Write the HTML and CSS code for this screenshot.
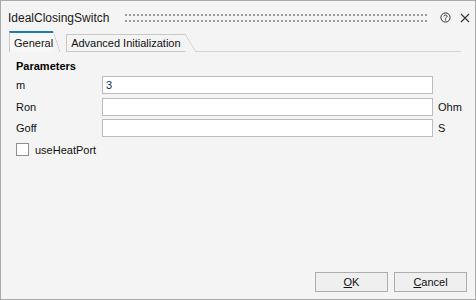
FILE: index.html
```html
<!DOCTYPE html>
<html lang="en">
<head>
    <meta charset="UTF-8">
    <title>IdealClosingSwitch</title>
    <link rel="stylesheet" href="styles.css">
</head>
<body>
    <div class="window">
        <div class="titlebar">
            <span class="title">IdealClosingSwitch</span>
            <span class="grip"></span>
            <svg class="help" width="11" height="11" viewBox="0 0 11 11">
                <circle cx="5.5" cy="5.5" r="4.6" fill="none" stroke="#333" stroke-width="1"/>
                <path d="M3.8 4.4 C3.8 2.6 7.2 2.6 7.2 4.3 C7.2 5.4 5.5 5.4 5.5 6.6" fill="none" stroke="#333" stroke-width="1"/>
                <rect x="5" y="7.4" width="1.1" height="1.1" fill="#333"/>
            </svg>
            <svg class="close" width="10" height="10" viewBox="0 0 10 10">
                <path d="M1 1 L9 9 M9 1 L1 9" stroke="#333" stroke-width="1.1"/>
            </svg>
        </div>

        <div class="tabs">
            <div class="tab active">General</div>
            <div class="tab">Advanced Initialization</div>
            <div class="tab-line"></div>
        </div>

        <div class="panel">
            <div class="group-title">Parameters</div>
            <div class="params">
                <label for="m">m</label>
                <input type="text" id="m" value="3">
                <span class="unit"></span>

                <label for="ron">Ron</label>
                <input type="text" id="ron">
                <span class="unit">Ohm</span>

                <label for="goff">Goff</label>
                <input type="text" id="goff">
                <span class="unit">S</span>
            </div>
            <label class="check"><span class="box"></span>useHeatPort</label>
        </div>

        <div class="buttons">
            <button type="button"><u>O</u>K</button>
            <button type="button"><u>C</u>ancel</button>
        </div>
    </div>
</body>
</html>
```

FILE: styles.css
```css
html, body {
    margin: 0;
    padding: 0;
}

body {
    font-family: "Liberation Sans", Arial, sans-serif;
    font-size: 11px;
    color: #000;
    background-color: #f4f4f4;
}

.window {
    width: 476px;
    height: 300px;
    box-sizing: border-box;
    border: 1px solid #a9a9a9;
    background-color: #f4f4f4;
    display: flex;
    flex-direction: column;
}

.titlebar {
    height: 30px;
    display: flex;
    align-items: center;
    padding: 3px 0 0 7px;
    box-sizing: border-box;
}

.title {
    font-size: 12px;
    color: #1a1a1a;
}

/* drag grip: two rows of small square dots */
.grip {
    width: 302px;
    height: 8px;
    margin-left: 16px;
    background-image:
        linear-gradient(to right, #9c9c9c 2px, transparent 2px),
        linear-gradient(to right, #9c9c9c 2px, transparent 2px);
    background-size: 4px 2px, 4px 2px;
    background-position: 0 0, 0 6px;
    background-repeat: repeat-x;
}

.help {
    margin-left: 13px;
}

.close {
    margin-left: 9px;
}

.tabs {
    display: flex;
    align-items: flex-end;
    height: 21px;
    padding-left: 8px;
}

.tab {
    position: relative;
    height: 18px;
    line-height: 17px;
    padding: 0 4px;
    box-sizing: border-box;
    border-left: 1px solid #c8c8c8;
    border-top: 1px solid #c8c8c8;
    border-bottom: 1px solid #c8c8c8;
    color: #111;
    margin-right: 11px;
}

.tab::after {
    content: '';
    position: absolute;
    left: 100%;
    top: -1px;
    bottom: -1px;
    width: 11px;
    background: linear-gradient(to top right, transparent calc(50% - 0.6px), #c8c8c8 50%, transparent calc(50% + 0.6px));
}

.tab.active {
    height: 21px;
    line-height: 20px;
    border-top: 2px solid #1c7ac4;
    border-bottom: none;
    margin-right: 13px;
    padding-right: 0;
    background-color: #f7f7f7;
}

.tab.active::after {
    width: 7px;
    top: -2px;
    bottom: 0;
}

.tab-line {
    flex: 1;
    border-bottom: 1px solid #d4d4d4;
    margin-right: 14px;
}

.panel {
    flex: 1;
    padding: 8px 0 0 15px;
}

.group-title {
    font-weight: bold;
    margin-bottom: 4px;
}

.params {
    display: grid;
    grid-template-columns: 86px 331px auto;
    row-gap: 3.5px;
    align-items: center;
}

.params label {
    color: #111;
}

.params input {
    height: 18px;
    box-sizing: border-box;
    border: 1px solid #bcbcbc;
    background-color: #fff;
    font-family: "Liberation Sans", Arial, sans-serif;
    font-size: 11px;
    padding: 0 3px;
    margin: 0;
    color: #0b2c4e;
}

.unit {
    padding-left: 5px;
    color: #111;
}

.check {
    display: flex;
    align-items: center;
    margin-top: 6px;
    color: #111;
}

.box {
    width: 11px;
    height: 11px;
    border: 1px solid #8f8f8f;
    background-color: #fff;
    margin-right: 6px;
}

.buttons {
    display: flex;
    justify-content: flex-end;
    gap: 6px;
    padding: 0 8px 7px 0;
}

button {
    width: 73px;
    height: 20px;
    padding: 0;
    border: 1px solid #adadad;
    background-color: #efefef;
    font-family: "Liberation Sans", Arial, sans-serif;
    font-size: 11px;
    color: #111;
}
```
